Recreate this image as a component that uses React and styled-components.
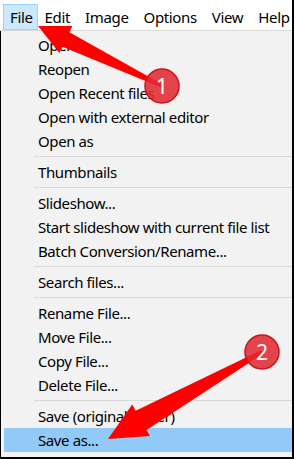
import styled, { createGlobalStyle } from "styled-components";

const GlobalStyle = createGlobalStyle`
  html, body { margin: 0; padding: 0; background: #fff; }
  body { font-family: "Noto Sans", "Liberation Sans", sans-serif; }
`;

const Frame = styled.div`
  position: relative;
  width: 294px;
  height: 459px;
  box-sizing: border-box;
  border-right: 2px solid #000;
  display: flex;
  flex-direction: column;
  overflow: hidden;
  background: #fff;
`;

const MenuBar = styled.nav`
  height: 30px;
  flex-shrink: 0;
  display: flex;
  align-items: flex-end;
  padding-left: 3px;
  border-bottom: 1px solid #dadada;
  background: #fff;
`;

const BarItem = styled.div`
  height: 26px;
  box-sizing: border-box;
  padding: 0 ${(p) => (p.active ? "4px" : "7px")} 1px 6px;
  display: flex;
  align-items: center;
  font-size: 15px;
  letter-spacing: -0.35px;
  color: #000;
  border: 1px solid ${(p) => (p.active ? "#99d1ff" : "transparent")};
  background: ${(p) => (p.active ? "#cce8ff" : "transparent")};
  white-space: nowrap;
`;

const Dropdown = styled.div`
  flex: 1;
  background: #f2f2f2;
  border-left: 1px solid #000;
  border-bottom: 2px solid #000;
  padding: 2px 0 0 3px;
`;

const Item = styled.div`
  height: 24px;
  display: flex;
  align-items: center;
  padding-left: 34px;
  font-size: 15px;
  letter-spacing: -0.4px;
  color: #000;
  white-space: nowrap;
  background: ${(p) => (p.selected ? "#91c9f7" : "transparent")};
`;

const Separator = styled.div`
  height: 7px;
  display: flex;
  align-items: center;
  padding-left: 30px;

  &::after {
    content: "";
    flex: 1;
    height: 1px;
    background: #d7d7d7;
  }
`;

const Overlay = styled.svg`
  position: absolute;
  top: 0;
  left: 0;
  pointer-events: none;
`;

const BadgeText = styled.text`
  font-family: "Noto Sans", "Liberation Sans", sans-serif;
  font-size: 21px;
  fill: #fff;
`;

const barItems = ["File", "Edit", "Image", "Options", "View", "Help"];

const groups = [
  ["Open", "Reopen", "Open Recent files", "Open with external editor", "Open as"],
  ["Thumbnails"],
  ["Slideshow...", "Start slideshow with current file list", "Batch Conversion/Rename..."],
  ["Search files..."],
  ["Rename File...", "Move File...", "Copy File...", "Delete File..."],
  ["Save (original folder)", "Save as..."],
];

// wedge arrow: wide head at tip, shaft tapering to the tail
const arrowPoints = ([tx, ty], [ex, ey], L, W, w1, w2) => {
  const len = Math.hypot(ex - tx, ey - ty);
  const dx = (ex - tx) / len;
  const dy = (ey - ty) / len;
  const nx = -dy;
  const ny = dx;
  const bx = tx + dx * L;
  const by = ty + dy * L;
  const pts = [
    [tx, ty],
    [bx + nx * W, by + ny * W],
    [bx + nx * w1, by + ny * w1],
    [ex + nx * w2, ey + ny * w2],
    [ex - nx * w2, ey - ny * w2],
    [bx - nx * w1, by - ny * w1],
    [bx - nx * W, by - ny * W],
  ];
  return pts.map((p) => p.map((v) => v.toFixed(1)).join(",")).join(" ");
};

const Badge = ({ x, y, n }) => (
  <g>
    <circle cx={x} cy={y} r="17" fill="#e02a33" fillOpacity="0.88" stroke="#c8141d" strokeWidth="1.5" />
    <BadgeText x={x} y={y + 7.5} textAnchor="middle">{n}</BadgeText>
  </g>
);

const App = () => {
  return (
    <>
      <GlobalStyle />
      <Frame>
        <MenuBar>
          {barItems.map((t, i) => (
            <BarItem key={t} active={i === 0}>{t}</BarItem>
          ))}
        </MenuBar>
        <Dropdown>
          {groups.map((g, gi) => (
            <div key={gi}>
              {gi > 0 && <Separator />}
              {g.map((t) => (
                <Item key={t} selected={t === "Save as..."}>{t}</Item>
              ))}
            </div>
          ))}
        </Dropdown>
        <Overlay width="294" height="459" viewBox="0 0 294 459">
          <polygon points={arrowPoints([38, 26], [162, 86], 31, 15, 8, 1.5)} fill="#ff0000" />
          <polygon points={arrowPoints([108, 439], [262, 352], 38, 18, 11, 2)} fill="#ff0000" />
          <Badge x={162} y={86} n="1" />
          <Badge x={262} y={352} n="2" />
        </Overlay>
      </Frame>
    </>
  );
};

export default App;
